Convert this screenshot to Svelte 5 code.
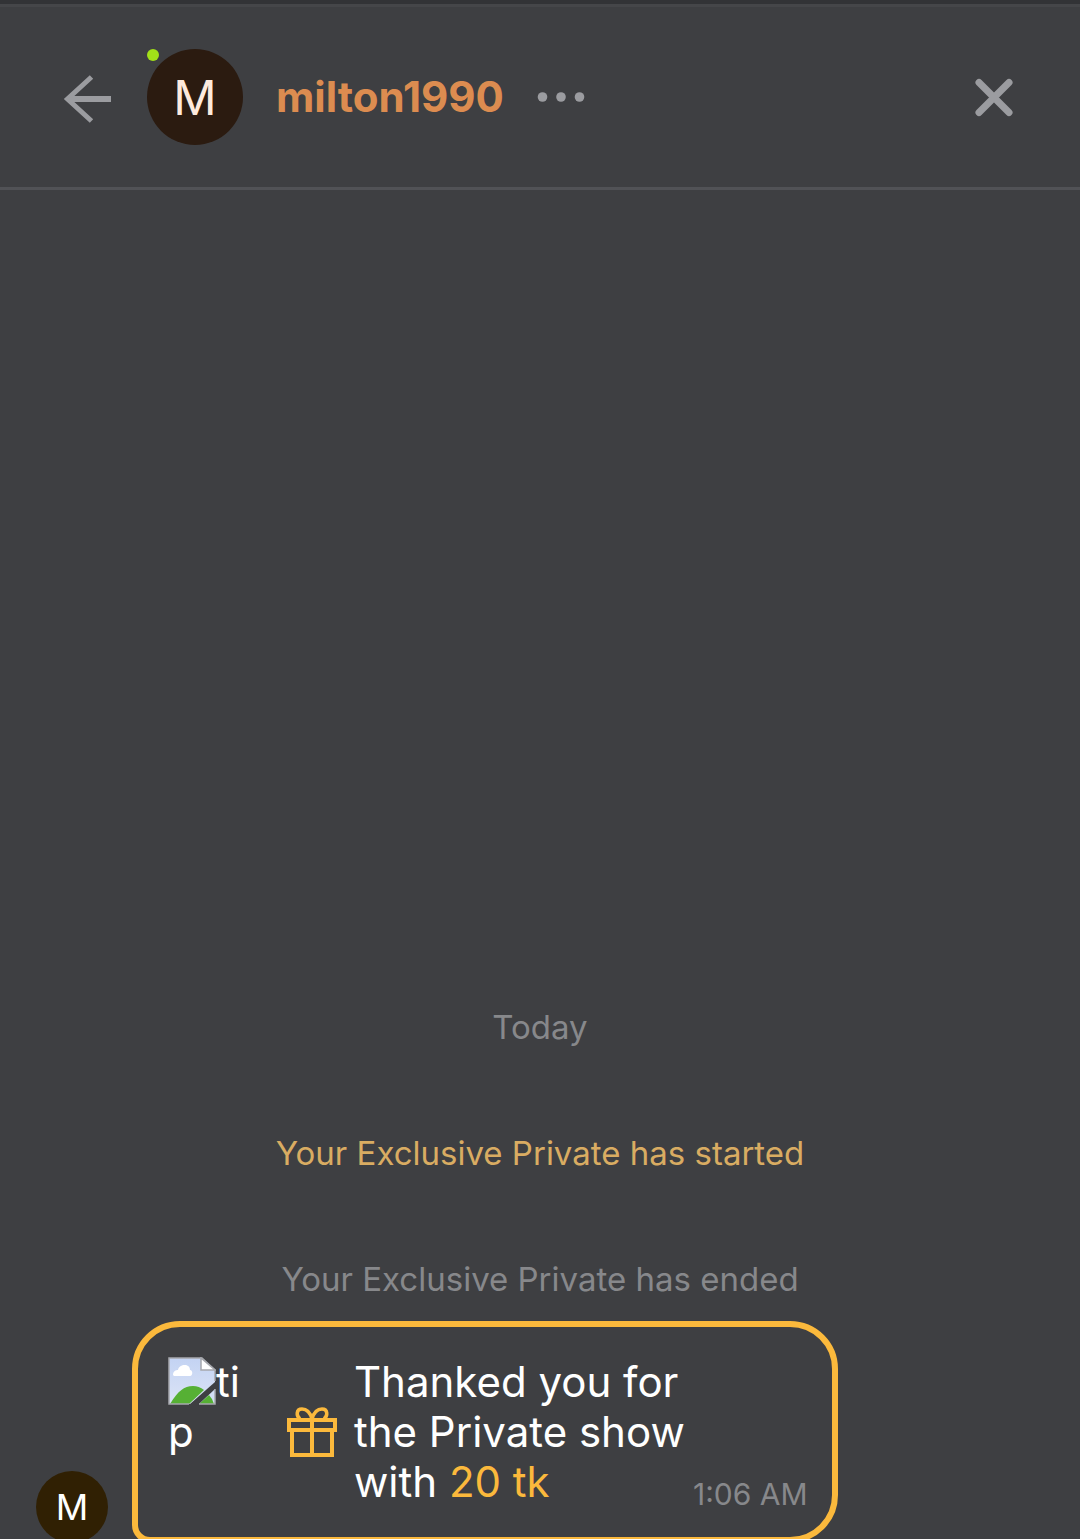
<script lang="ts">
  interface Notice {
    text: string;
    kind: 'date' | 'started' | 'ended';
  }

  const user = { name: 'milton1990', initial: 'M' };

  const notices: Notice[] = [
    { text: 'Today', kind: 'date' },
    { text: 'Your Exclusive Private has started', kind: 'started' },
    { text: 'Your Exclusive Private has ended', kind: 'ended' },
  ];

  const tip = { amount: '20 tk', time: '1:06 AM' };
</script>

<div class="chat">
  <header class="header">
    <button class="icon-btn" type="button" aria-label="Back">
      <svg width="48" height="52" viewBox="0 0 48 52" fill="none" stroke="currentColor" stroke-width="5">
        <path d="M28.5 6 4.5 28l24 22" />
        <path d="M5 28h43" stroke-width="6" />
      </svg>
    </button>
    <div class="avatar large">
      {user.initial}
      <span class="online"></span>
    </div>
    <a class="name" href="#profile">{user.name}</a>
    <button class="icon-btn" type="button" aria-label="More">
      <svg width="48" height="12" viewBox="0 0 48 12" fill="currentColor">
        <circle cx="5.5" cy="6" r="4.8" />
        <circle cx="24" cy="6" r="4.8" />
        <circle cx="42.5" cy="6" r="4.8" />
      </svg>
    </button>
    <button class="icon-btn close" type="button" aria-label="Close">
      <svg width="40" height="40" viewBox="0 0 40 40" fill="none" stroke="currentColor" stroke-width="7" stroke-linecap="round">
        <path d="M5 5.5l30 30M35 5.5l-30 30" />
      </svg>
    </button>
  </header>

  <main class="messages">
    <div class="notices">
      {#each notices as notice, i (i)}
        <p class={'notice ' + notice.kind}>{notice.text}</p>
      {/each}
    </div>

    <div class="row">
      <div class="avatar small">{user.initial}</div>
      <div class="bubble">
        <div class="tip">
          <svg class="broken" width="48" height="48" viewBox="0 0 48 48" aria-hidden="true">
            <defs>
              <linearGradient id="sky" x1="0" y1="0" x2="0" y2="1">
                <stop offset="0" stop-color="#c3d3f3" />
                <stop offset="1" stop-color="#dce4f6" />
              </linearGradient>
            </defs>
            <path d="M1 1h32l14 12v12L22 47H1z" fill="url(#sky)" />
            <path d="M47 32v15H31z" fill="#d3def5" />
            <path d="M5 18c0-4 3-5 5-5 1-6 12-7 12 0 3 0 3 6 0 6H6z" fill="#fff" />
            <path d="M2 47C10 34 16 29 25 29q6 0 11 4L21 47z" fill="#56b034" />
            <path d="M41 38q3 3 5 9H31z" fill="#56b034" />
            <path d="M47 24V13L34 1H1v46h20M47 32v15H31" fill="none" stroke="#a6a8ad" stroke-width="1.5" />
            <path d="M33 1v12h14z" fill="#fff" stroke="#a6a8ad" stroke-width="1.5" />
          </svg>tip
        </div>
        <svg class="gift" width="50" height="50" viewBox="0 0 50 50" fill="none" stroke="currentColor" stroke-width="4">
          <path d="M2 13h46v10H2zM5 23h40v25H5zM25 13v35" />
          <path d="M25 12C23 5 19 2 15 2c-6 0-6 7-2 10M25 12c2-7 6-10 10-10 6 0 6 7 2 10" stroke-width="3.5" />
        </svg>
        <p class="text">Thanked you for the Private show with <span class="amount">{tip.amount}</span></p>
        <time class="time">{tip.time}</time>
      </div>
    </div>
  </main>
</div>

<style>
  :global(body) {
    background: #3e3f42;
  }
  .chat {
    box-sizing: border-box;
    height: 100vh;
    display: flex;
    flex-direction: column;
    overflow: hidden;
    border-top: 4px solid #323336;
    background: #3e3f42;
    color: #fff;
    font-family: Inter, 'Liberation Sans', sans-serif;
  }
  .header {
    display: flex;
    align-items: center;
    flex-shrink: 0;
    padding: 42px 66px 42px 63px;
    border-top: 3px solid #454649;
    border-bottom: 3px solid #515256;
  }
  .icon-btn {
    display: flex;
    padding: 0;
    border: none;
    background: none;
    color: #9b9ca0;
    cursor: pointer;
  }
  .close { margin-left: auto; }

  .avatar {
    position: relative;
    display: grid;
    place-items: center;
    flex-shrink: 0;
    border-radius: 50%;
  }
  .avatar.large {
    width: 96px;
    height: 96px;
    margin: 0 33px 0 36px;
    background: #2b1b10;
    color: #fdeadd;
    font-size: 48px;
  }
  .avatar.small {
    width: 72px;
    height: 72px;
    background: #302003;
    font-size: 36px;
  }
  .online {
    position: absolute;
    top: 0;
    left: 0;
    width: 12px;
    height: 12px;
    border-radius: 50%;
    background: #a2e118;
  }
  .name {
    margin-right: 33px;
    color: #dc8c50;
    font-size: 42px;
    font-weight: 700;
    line-height: 48px;
    text-decoration: none;
  }

  .messages {
    flex: 1;
    min-height: 0;
    display: flex;
    flex-direction: column;
    justify-content: flex-end;
    gap: 21px;
    /* newest bubble runs slightly under the bottom edge */
    margin-bottom: -4px;
  }
  .notices {
    display: flex;
    flex-direction: column;
    gap: 84px;
  }
  .notice {
    margin: 0;
    color: #87888b;
    font-size: 33px;
    line-height: 42px;
    text-align: center;
  }
  .notice.started { color: #d9ac62; }

  .row {
    display: flex;
    align-items: flex-end;
    gap: 24px;
    padding: 0 36px;
  }
  .bubble {
    box-sizing: border-box;
    width: 70%;
    display: flex;
    align-items: center;
    padding: 30px 24px 30px 30px;
    border: 6px solid #fbb93c;
    border-radius: 48px 48px 48px 18px;
    font-size: 42px;
    line-height: 50px;
  }
  .tip {
    align-self: flex-start;
    width: 84px;
    flex-shrink: 0;
    word-break: break-all;
  }
  .broken { vertical-align: top; }
  .gift {
    flex-shrink: 0;
    margin: 0 17px 0 35px;
    color: #fbb93c;
  }
  .text {
    flex: 1;
    margin: 0;
  }
  .amount { color: #fbb93c; }
  .time {
    align-self: flex-end;
    color: #87888b;
    font-size: 30px;
    line-height: 26px;
    white-space: nowrap;
  }
</style>
